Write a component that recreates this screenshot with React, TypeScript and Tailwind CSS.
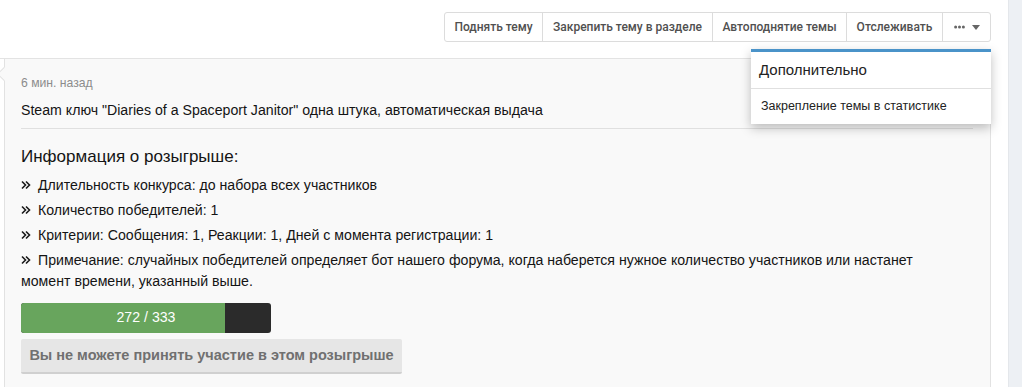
import React from "react";

const items = [
  "Длительность конкурса: до набора всех участников",
  "Количество победителей: 1",
  "Критерии: Сообщения: 1, Реакции: 1, Дней с момента регистрации: 1",
  "Примечание: случайных победителей определяет бот нашего форума, когда наберется нужное количество участников или настанет момент времени, указанный выше.",
];

function Chevrons() {
  return (
    <svg width="10" height="10" viewBox="0 0 10 10" className="inline-block mr-[7px] -mt-[2px] align-middle">
      <path d="M1 1.5 L4.5 5 L1 8.5 M5 1.5 L8.5 5 L5 8.5" fill="none" stroke="#1a1a1a" strokeWidth="1.6" />
    </svg>
  );
}

export default function App() {
  const tb = "flex items-center justify-center h-full text-[12px] text-[#505050] font-medium border-l border-[#dcdcdc] first:border-l-0";
  return (
    <div className="relative w-[1022px] h-[387px] overflow-hidden bg-white" style={{ fontFamily: '"Liberation Sans", Arial, sans-serif' }}>
      <div className="flex h-full">
        <div className="w-[1008px] flex flex-col">
          <div className="flex justify-end pr-[17px] pt-[12px] h-[58px]">
            <div className="flex h-[30px] border border-[#dcdcdc] rounded-[3px]" style={{ fontFamily: 'Roboto, "Liberation Sans", sans-serif' }}>
              <div className={tb + " w-[97px]"}>Поднять тему</div>
              <div className={tb + " w-[170px]"}>Закрепить тему в разделе</div>
              <div className={tb + " w-[134px]"}>Автоподнятие темы</div>
              <div className={tb + " w-[96px]"}>Отслеживать</div>
              <div className={tb + " w-[48px] gap-[7px]"}>
                <svg width="11" height="4" viewBox="0 0 11 4"><circle cx="1.6" cy="2" r="1.5" fill="#666" /><circle cx="5.5" cy="2" r="1.5" fill="#666" /><circle cx="9.4" cy="2" r="1.5" fill="#666" /></svg>
                <svg width="8" height="5" viewBox="0 0 8 5"><path d="M0 0 L8 0 L4 5 Z" fill="#666" /></svg>
              </div>
            </div>
          </div>
          <div className="w-[991px] border-t border-[#e3e3e3] flex-1">
            <div className="relative ml-[4px] h-full bg-[#f9f9f9] border-l border-r border-[#e2e2e2] pl-[16px] pr-[17px] pt-[17px]">
              <div className="absolute -left-[6px] top-[10px] w-[10px] h-[10px] bg-[#f9f9f9] border-l border-b border-[#e2e2e2] rotate-45" />
              <div className="text-[12.2px] leading-[14px] text-[#8c8c8c]">6 мин. назад</div>
              <div className="mt-[10px] text-[14.15px] leading-[20px] text-[#141414] pb-[8px] border-b border-[#e0e0e0]">
                Steam ключ "Diaries of a Spaceport Janitor" одна штука, автоматическая выдача
              </div>
              <div className="mt-[16px] text-[17px] leading-[24px] text-[#141414]">Информация о розыгрыше:</div>
              <ul className="mt-[6px] pr-[24px] text-[14.15px] leading-[21px] text-[#141414]">
                {items.map((t) => (
                  <li key={t} className="mb-[4px]">
                    <Chevrons />
                    {t}
                  </li>
                ))}
              </ul>
              <div className="relative mt-[11px] w-[250px] h-[30px] rounded-[3px] bg-[#2b2b2b] overflow-hidden">
                <div className="h-full bg-[#68a55d]" style={{ width: `${(272 / 333) * 100}%` }} />
                <div className="absolute inset-0 flex items-center justify-center text-white text-[14.15px]">272 / 333</div>
              </div>
              <div className="mt-[6px] w-[381px] h-[35px] flex items-center justify-center bg-[#e6e6e6] border-b-2 border-[#d0d0d0] rounded-[2px] text-[14.5px] font-bold text-[#707070]">
                Вы не можете принять участие в этом розыгрыше
              </div>
            </div>
          </div>
        </div>
        <div className="flex-1 bg-[#edf0f4] border-l border-[#e4e7eb]" />
      </div>

      <div className="absolute left-[751px] top-[49px] w-[240px] bg-white border-t-[3px] border-[#4a93c9] shadow-[0_4px_10px_rgba(0,0,0,0.25)]">
        <div className="h-[37px] flex items-center px-[8px] text-[15px] text-[#222] border-b border-[#e0e0e0]">Дополнительно</div>
        <div className="h-[35px] flex items-center px-[10px] text-[12.5px] text-[#222]">Закрепление темы в статистике</div>
      </div>
    </div>
  );
}
